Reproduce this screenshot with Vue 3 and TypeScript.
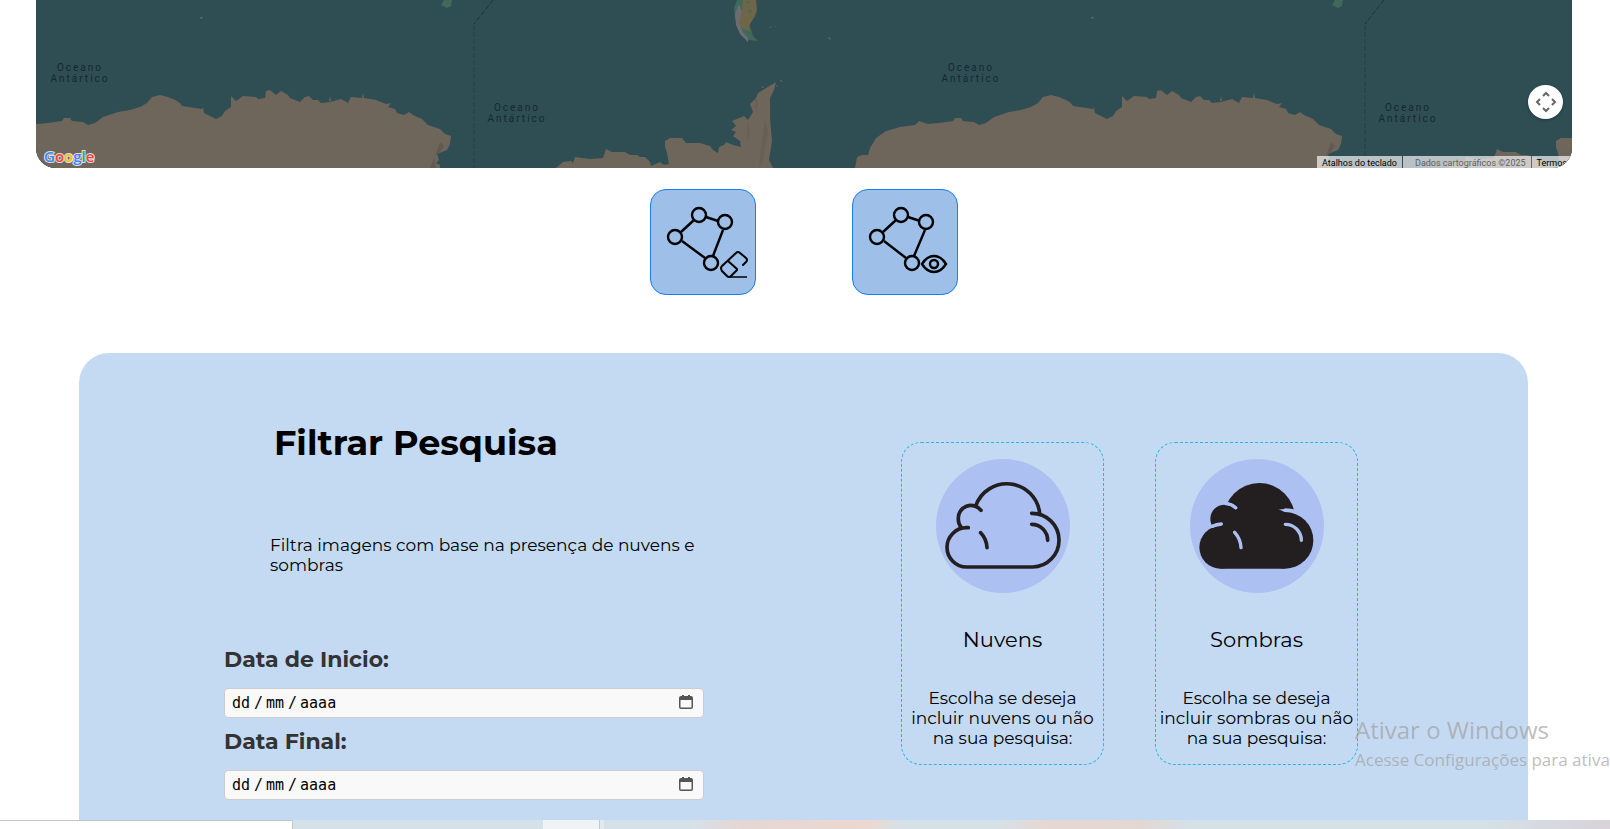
<script setup lang="ts">
import { reactive } from 'vue'

interface DateField {
  id: string
  label: string
  day: string
  month: string
  year: string
}

const dates = reactive<DateField[]>([
  { id: 'inicio', label: 'Data de Inicio:', day: '', month: '', year: '' },
  { id: 'final', label: 'Data Final:', day: '', month: '', year: '' },
])

const tileOffsets: number[] = [0, 891]
</script>

<template>
  <div class="page">
    <section class="map" aria-label="Mapa">
      <svg class="map-canvas" viewBox="36 0 1536 168" preserveAspectRatio="xMinYMin slice" aria-hidden="true">
        <rect x="36" width="1536" height="168" fill="#2e4e54" />
        <g v-for="dx in tileOffsets" :key="dx" :transform="`translate(${dx} 0)`">
          <path
            fill="#6e655b"
            d="M-36 168L-34 157L-29 155L-23 155L-21 148L-15 138L-5 131L9 127L24 125L28 121L37 124L48 123L62 121L64 118L70 118L72 121L83 122L88 125L95 123L103 117L118 112L130 110L140 107L147 103L152 97L160 95L168 97L175 100L180 103L182 106L202 109L203 107L204 113L216 119L222 116L225 111L231 107L231 96L236 101L243 96L256 97L258 99L265 98L266 91L270 90L276 95L281 91L288 95L290 98L300 102L305 97L309 96L313 100L318 100L321 103L330 102L341 99L348 103L351 97L362 98L363 93L364 98L376 100L386 104L391 103L388 107L395 109L397 113L404 115L409 112L413 115L422 119L428 125L440 129L445 134L451 136L450 144L447 150L437 154L439 160L436 163L440 165L440 168Z"
          />
          <path fill="#625a50" d="M440 142L444 146L440 152L435 156L438 148ZM434 158L436 168H430Z" />
          <path fill="#6e655b" d="M330 96l1 5h-2z" />
          <path
            fill="#6e655b"
            d="M556 168L563 162L571 161L573 163L575 157L590 159L603 158L606 149L612 152L625 152L630 155L637 155L640 157L645 157L650 162L651 166L660 162L664 165L669 164L667 153L665 147L665 141L670 138L682 138L686 143L700 143L710 146L713 150L718 153L719 147L724 145L726 142L733 145L741 147L740 141L733 136L736 132L731 130L736 126L732 121L744 116L746 118L748 120L753 112L750 104L756 98L758 93L763 90L776 82L774 90L770 98L770 118L772 141L769 160L773 168Z"
          />
          <path fill="#685f55" d="M765 120l3 12-3 14-2 16-4 6 2-20zM747 120l3 14-2 8zM755 98l3 1-2 14z" />
          <path fill="#6e655b" d="M761 87l3-1-1 2zM780 80l3 1-2 1zM776 85l2 1-1 1z" />
          <path fill="#74683f" d="M684 151l5-1-3 2zM739 153l4-3-2 3zM608 163h8v1h-8z" />
          <path fill="#41695a" d="M737 0l-3 8 1 11 4 10 5 7 5 4 9 1-5-5-2-7-5-8-2-21zM769 27l4-1-3 2zM775 26l2 1h-2z" />
          <path fill="#6c6d71" d="M739 4l-4 10 1 11 4 9 8 8v-4l-6-7-2-9 2-10z" />
          <path fill="#6f6548" d="M743 0l-1 10-3 14 4 5 6 2 1-7 5-8 2-6-1-10z" />
          <path fill="#41695a" d="M747 1l3 1-2 2zM748 10l4 1-2 2z" />
          <path fill="#707867" d="M827 37l3 1 1 2z" />
          <path fill="#41695a" d="M444 0h8l-1 6-4 2-6-3z" />
          <path fill="#706e51" d="M200 17h3l-2 2z" />
          <path fill="none" stroke="#203038" stroke-width="1" stroke-dasharray="5 2" d="M493 0L474 24" />
          <path fill="none" stroke="#2a3b44" stroke-width="1" stroke-dasharray="5 2" d="M474 25V168" />
          <g class="ocean" text-anchor="middle">
            <text x="80" y="71">Oceano</text>
            <text x="80" y="82">Antártico</text>
            <text x="517" y="111">Oceano</text>
            <text x="517" y="122">Antártico</text>
          </g>
        </g>
      </svg>
      <a class="google" href="#" aria-label="Google">
        <svg width="60" height="24" viewBox="0 0 60 24">
          <text x="4" y="17"><tspan fill="#4285f4">G</tspan><tspan fill="#ea4335">o</tspan><tspan fill="#fbbc04">o</tspan><tspan fill="#4285f4">g</tspan><tspan fill="#34a853">l</tspan><tspan fill="#ea4335">e</tspan></text>
        </svg>
      </a>
      <button class="camera" type="button" aria-label="Controles da câmera do mapa">
        <svg width="22" height="22" viewBox="0 0 22 22" fill="none" stroke="#666" stroke-width="2">
          <path d="M8 5l3-3 3 3M8 17l3 3 3-3M5 8l-3 3 3 3M17 8l3 3-3 3" />
        </svg>
      </button>
      <div class="credits">
        <button type="button">Atalhos do teclado</button>
        <span>Dados cartográficos ©2025</span>
        <a href="#">Termos</a>
      </div>
    </section>

    <div class="tools">
      <button class="tool" type="button" aria-label="Apagar polígono">
        <svg viewBox="0 0 104 104" fill="none" stroke="#000" stroke-width="2.400">
          <path d="M30 42L43 30M55 27l12 4M72 40L62 66M31 51l23 17" />
          <circle cx="48" cy="25" r="7" />
          <circle cx="74" cy="32" r="7" />
          <circle cx="24" cy="47" r="7" />
          <circle cx="60" cy="73" r="7" />
          <path
            stroke-width="2"
            stroke-linecap="round"
            d="M92 75l3-3q2-2 0-4l-6-5q-2-2-4 0L71 76q-2 2 0 5l5 5q2 2 4 0l6-6M77 71l9 8"
          />
          <path stroke-width="1.500" d="M79 87h17" />
        </svg>
      </button>
      <button class="tool" type="button" aria-label="Visualizar polígono">
        <svg viewBox="0 0 104 104" fill="none" stroke="#000" stroke-width="2.400">
          <path d="M30 42L43 30M55 27l12 4M72 40L61 66M31 51l22 17" />
          <circle cx="48" cy="25" r="7" />
          <circle cx="73" cy="32" r="7" />
          <circle cx="24" cy="47" r="7" />
          <circle cx="59" cy="73" r="7" />
          <path d="M69 74Q74 66 81 66T93 74Q88 82 81 82T69 74Z" />
          <circle cx="81" cy="74" r="4" />
        </svg>
      </button>
    </div>

    <main class="panel">
      <form class="filter" @submit.prevent>
        <h1>Filtrar Pesquisa</h1>
        <p class="intro">Filtra imagens com base na presença de nuvens e sombras</p>
        <div v-for="d in dates" :key="d.id" class="field">
          <label :for="d.id">{{ d.label }}</label>
          <div class="date">
            <input :id="d.id" v-model="d.day" class="two" placeholder="dd" maxlength="2" />
            <span>/</span>
            <input v-model="d.month" class="two" placeholder="mm" maxlength="2" aria-label="Mês" />
            <span>/</span>
            <input v-model="d.year" class="four" placeholder="aaaa" maxlength="4" aria-label="Ano" />
            <button type="button" aria-label="Abrir calendário">
              <svg width="14" height="14" viewBox="0 0 14 14">
                <path fill="#555" d="M3 0h2v1h4V0h2v1h1q2 0 2 2v9q0 2-2 2H2q-2 0-2-2V3q0-2 2-2h1zM1.500 5v7q0 .5.5.5h10q.5 0 .5-.5V5z" fill-rule="evenodd" />
              </svg>
            </button>
          </div>
        </div>
      </form>

      <div class="cards">
        <article class="card">
          <svg class="cloud" viewBox="0 0 402 402" aria-hidden="true">
            <circle cx="201" cy="201" r="201" fill="#adc0f2" />
            <g fill="none" stroke="#231f20" stroke-width="11" stroke-linecap="round">
              <path d="M97 206H92A59 59 0 0 0 92 324H290A80 80 0 0 0 287 163" />
              <path d="M119 141A99 99 0 0 1 311 163" />
              <path d="M135 154A38 38 0 0 0 67 180A38 38 0 0 0 76 206" />
              <path d="M287 196A48 48 0 0 1 335 244M134 221Q152 240 153 266" />
            </g>
          </svg>
          <h2>Nuvens</h2>
          <p>Escolha se deseja incluir nuvens ou não na sua pesquisa:</p>
        </article>
        <article class="card">
          <svg class="cloud" viewBox="0 0 402 402" aria-hidden="true">
            <circle cx="201" cy="201" r="201" fill="#adc0f2" />
            <g transform="translate(-2 0)">
              <g fill="#231f20">
                <circle cx="210" cy="179" r="107" />
                <circle cx="106" cy="180" r="51" fill="#adc0f2" />
                <circle cx="106" cy="180" r="43" />
                <circle cx="287" cy="244" r="94" fill="#adc0f2" />
                <circle cx="287" cy="244" r="85" />
                <circle cx="94" cy="265" r="73" fill="#adc0f2" />
                <circle cx="94" cy="265" r="64" />
                <path d="M94 202L100 190L140 150L200 120L286 159V329H94z" />
              </g>
              <g fill="none" stroke="#adc0f2" stroke-width="10" stroke-linecap="round">
                <path d="M110 134Q127 135 139 146M70 202Q82 195 96 195M288 153Q310 153 322 160" />
                <path d="M288 196A48 48 0 0 1 336 244M136 220Q154 240 155 266" />
              </g>
            </g>
          </svg>
          <h2>Sombras</h2>
          <p>Escolha se deseja incluir sombras ou não na sua pesquisa:</p>
        </article>
      </div>
    </main>

    <aside class="activation">
      <strong>Ativar o Windows</strong>
      <span>Acesse Configurações para ativa</span>
    </aside>

    <footer class="taskbar">
      <div class="search"></div>
      <div class="active-app"></div>
      <div class="next-app"></div>
    </footer>
  </div>
</template>

<style>
body {
  margin: 0;
  background: #fff;
}
</style>

<style scoped>
.page {
  position: relative;
  box-sizing: border-box;
  height: 100vh;
  padding-right: 3px;
  overflow: hidden;
  font-family: Montserrat, Inter, sans-serif;
  color: #000;
}
button {
  margin: 0;
  padding: 0;
  border: 0;
  background: none;
  font: inherit;
  color: inherit;
}
.map {
  position: relative;
  height: 168px;
  margin: 0 35px 0 36px;
  border-radius: 0 0 20px 20px;
  overflow: hidden;
  background: #2e4e54;
}
.map-canvas {
  display: block;
  width: 100%;
  height: 168px;
}
.ocean {
  font: 10px Roboto, sans-serif;
  letter-spacing: 2px;
  fill: #16282f;
}
.google {
  position: absolute;
  left: 4px;
  bottom: -1px;
  height: 24px;
}
.google text {
  font: 600 15px "Open Sans", sans-serif;
  stroke: #ddd;
  stroke-width: 2px;
  paint-order: stroke;
}
.camera {
  position: absolute;
  right: 9px;
  top: 85px;
  display: grid;
  place-items: center;
  width: 35px;
  height: 34px;
  border-radius: 50%;
  background: #fff;
  box-shadow: 0 1px 3px rgba(0, 0, 0, 0.3);
}
.credits {
  position: absolute;
  right: 0;
  bottom: -2px;
  display: flex;
  font: 9px/14px Roboto, sans-serif;
  white-space: nowrap;
}
.credits > * {
  padding: 0 5px;
  background: rgba(245, 245, 245, 0.7);
  text-decoration: none;
}
.credits button {
  border-right: 1px solid #2e4e54;
  color: #000;
}
.credits span {
  padding-left: 12px;
  border-right: 1px solid #6e655b;
  color: #5f6266;
}
.credits a {
  color: #000;
}
.tools {
  display: flex;
  justify-content: center;
  gap: 96px;
  margin-top: 21px;
}
.tool {
  box-sizing: border-box;
  width: 106px;
  height: 106px;
  border: 1px solid #1a7df0;
  border-radius: 16px;
  background: #9dbfe8;
}
.tool svg {
  display: block;
  width: 104px;
  height: 104px;
}
.panel {
  display: flex;
  justify-content: space-between;
  align-items: flex-start;
  min-height: 640px;
  margin: 58px 79px 0;
  padding: 0 170px 0 145px;
  box-sizing: border-box;
  border-radius: 30px;
  background: #c4daf2;
}
.filter {
  width: 480px;
  padding-top: 68px;
}
h1 {
  margin: 0 0 0 50px;
  font-size: 35px;
  line-height: 44px;
  font-weight: 700;
}
.intro {
  width: 434px;
  margin: 70px 0 0 46px;
  font-size: 17px;
  line-height: 20px;
}
.field {
  margin-top: 10px;
}
.intro + .field {
  margin-top: 71px;
}
.field label {
  display: block;
  font-size: 22px;
  line-height: 28px;
  font-weight: 700;
  color: #333;
}
.date {
  display: flex;
  align-items: center;
  box-sizing: border-box;
  height: 30px;
  margin-top: 14px;
  padding: 0 10px 0 7px;
  border: 1px solid #ccc;
  border-radius: 4px;
  background: #f9f9f9;
  font: 15px "DejaVu Sans Mono", monospace;
}
.date input {
  padding: 0;
  border: 0;
  outline: 0;
  background: none;
  font: inherit;
  color: #000;
}
.date input::placeholder {
  color: #000;
  opacity: 1;
}
.date span {
  padding: 0 3px;
}
.two {
  width: 19px;
}
.four {
  width: 40px;
}
.date button {
  height: 14px;
  margin-left: auto;
  margin-bottom: 2px;
}
.date button svg {
  display: block;
}
.cards {
  display: flex;
  gap: 51px;
  padding-top: 89px;
}
.card {
  display: flex;
  flex-direction: column;
  align-items: center;
  box-sizing: border-box;
  width: 203px;
  height: 323px;
  padding-top: 16px;
  border: 1px dashed #2ab5e0;
  border-radius: 20px;
  text-align: center;
}
.cloud {
  width: 134px;
  height: 134px;
}
h2 {
  margin: 34px 0 0;
  font-size: 21px;
  line-height: 26px;
  font-weight: 400;
}
.card p {
  margin: 35px 2px 0;
  font-size: 17px;
  line-height: 20px;
}
.activation {
  position: absolute;
  right: 0;
  bottom: 56px;
  width: 255px;
  font-family: "Segoe UI", "Open Sans", sans-serif;
  color: rgba(160, 160, 160, 0.7);
  white-space: nowrap;
  pointer-events: none;
}
.activation strong {
  display: block;
  font-size: 24px;
  line-height: 34px;
  font-weight: 400;
}
.activation span {
  display: block;
  font-size: 17px;
  line-height: 26px;
}
.taskbar {
  position: absolute;
  left: 0;
  right: 0;
  bottom: 0;
  display: flex;
  height: 9px;
  background: linear-gradient(
    90deg,
    #d5e1e9 43%,
    #e6d6d2 46%,
    #ebd9d0 54%,
    #d5e1e7 56%,
    #d5e1e7 62%,
    #e7d7d1 65%,
    #e4d7d2 71%,
    #d4e1e7 74%,
    #d4e1e7 92%,
    #d8d4da 99%
  );
}
.search {
  width: 292px;
  border-top: 1px solid #c4c6c8;
  border-right: 1px solid #c4c6c8;
  background: #fff;
}
.active-app {
  width: 56px;
  margin-left: 250px;
  border-right: 1px solid #bccbd6;
  background: #eef3f6;
}
.next-app {
  width: 4px;
  background: #e2eaf0;
}
</style>
